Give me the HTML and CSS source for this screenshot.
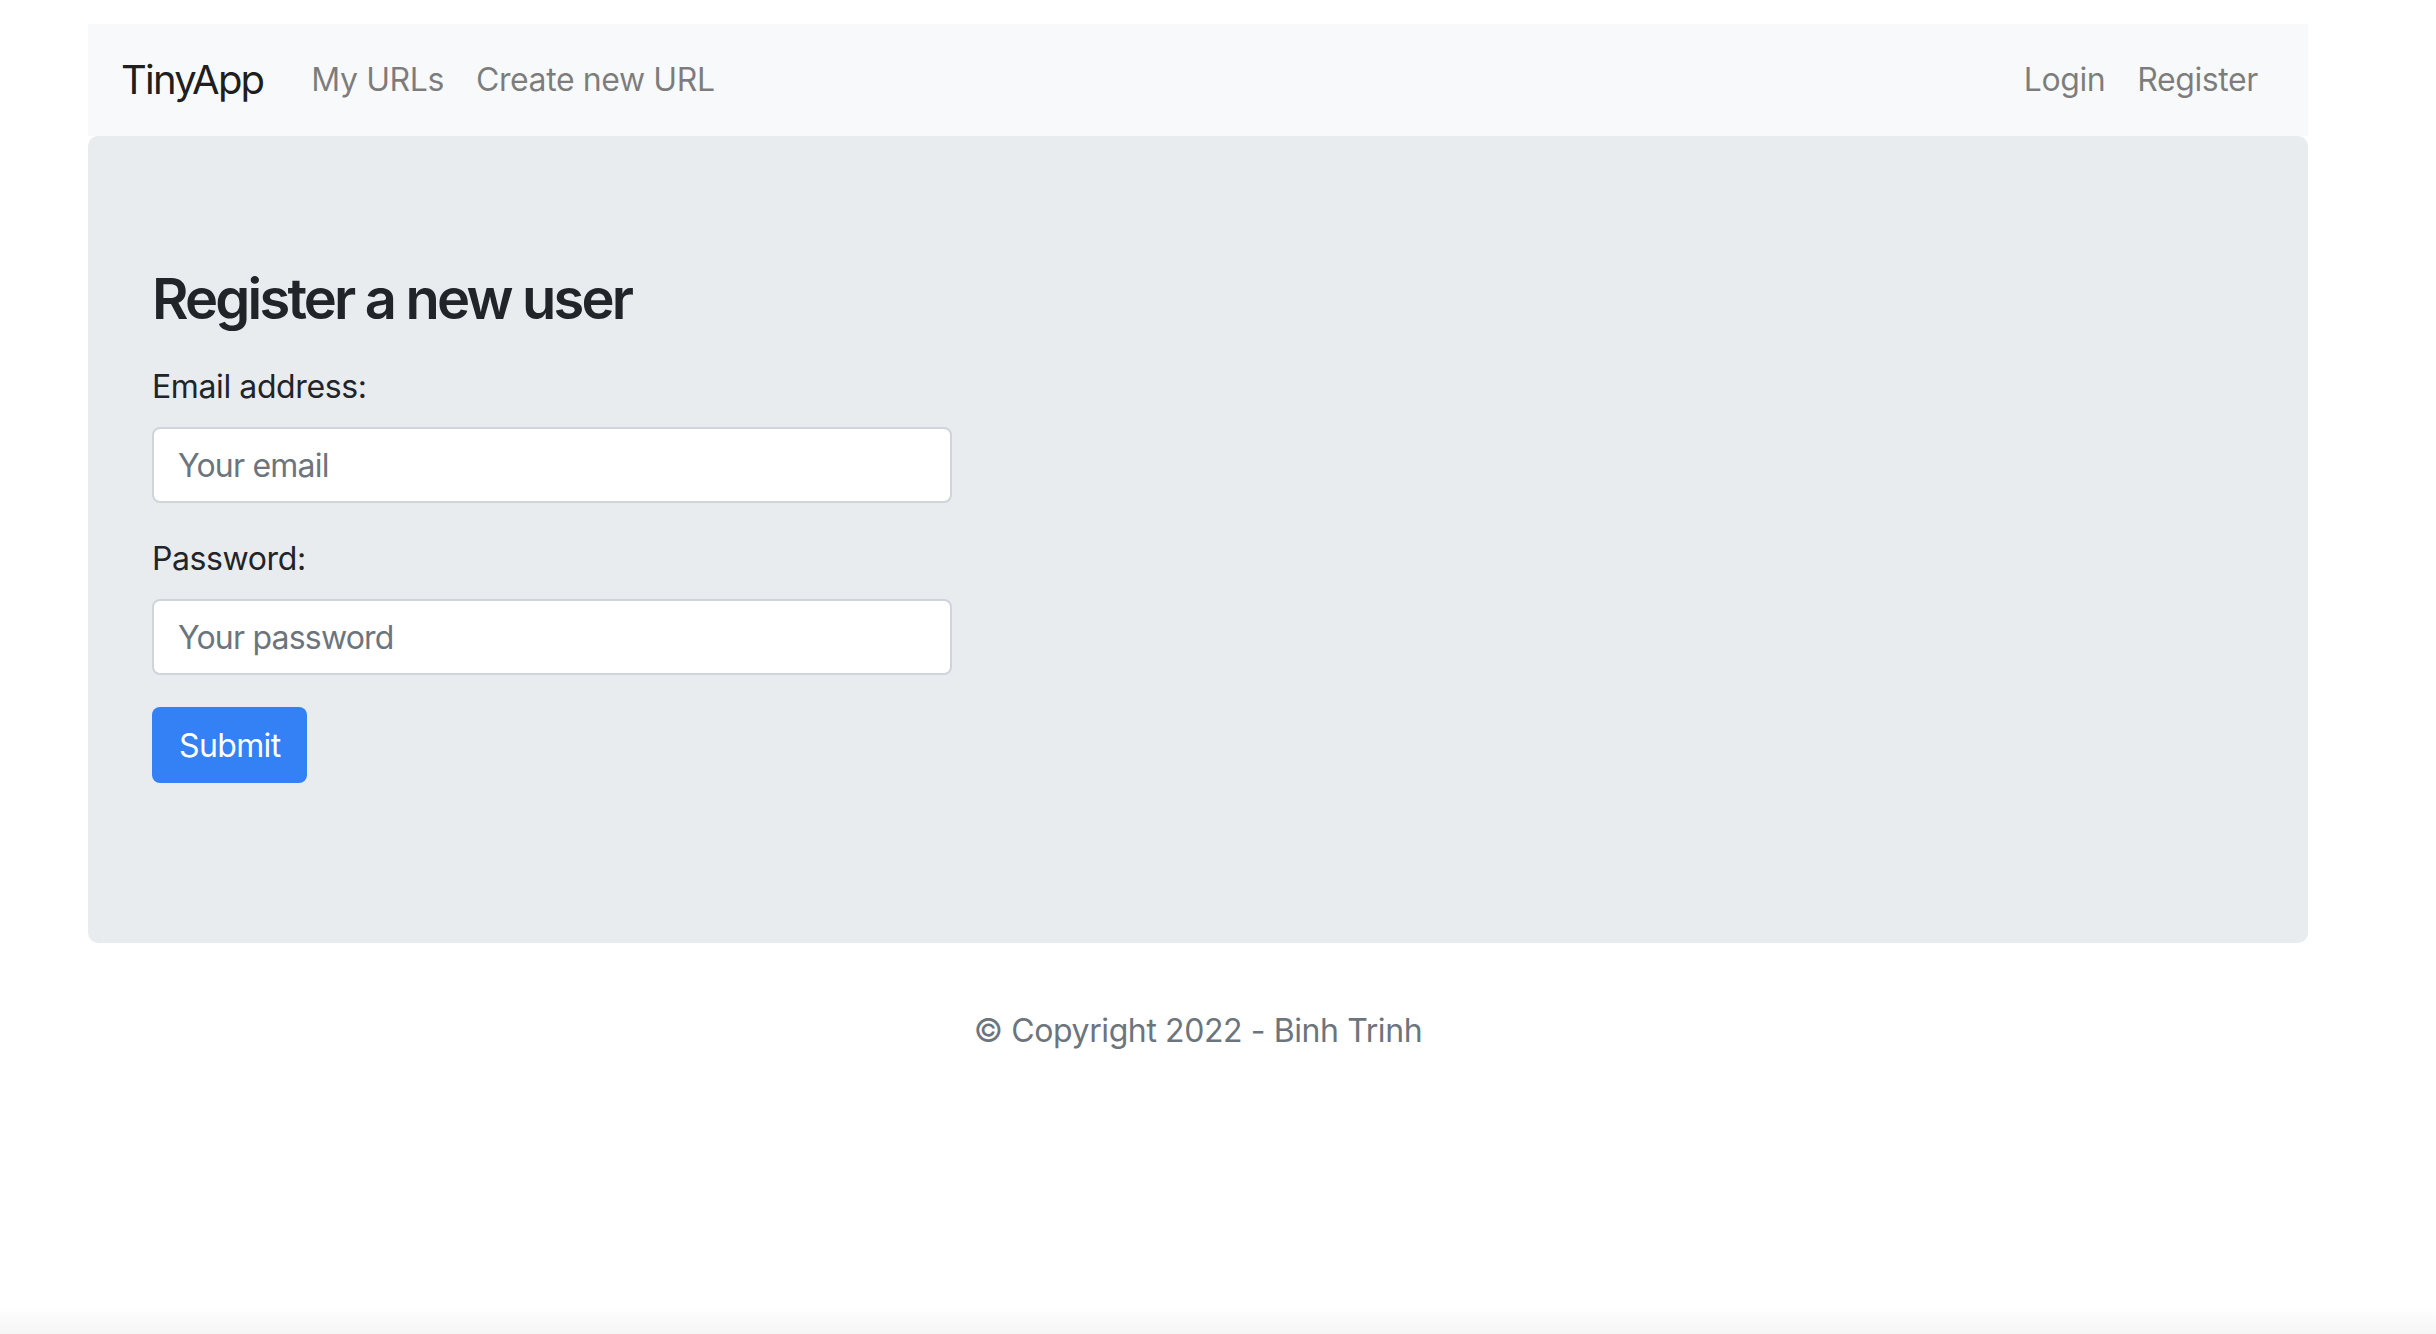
FILE: index.html
```html
<!DOCTYPE html>
<html lang="en">
<head>
<meta charset="utf-8">
<title>TinyApp - Register</title>
<link rel="stylesheet" href="styles.css">
</head>
<body>
<div class="page">
  <nav class="navbar">
    <a class="brand" href="#">TinyApp</a>
    <div class="nav-group">
      <a class="nav-link" href="#">My URLs</a>
      <a class="nav-link" href="#">Create new URL</a>
    </div>
    <div class="nav-group nav-right">
      <a class="nav-link" href="#">Login</a>
      <a class="nav-link" href="#">Register</a>
    </div>
  </nav>
  <main class="jumbotron">
    <h3 class="title">Register a new user</h3>
    <form class="form">
      <div class="form-group">
        <label class="label" for="email">Email address:</label>
        <input class="input" id="email" type="email" placeholder="Your email">
      </div>
      <div class="form-group">
        <label class="label" for="password">Password:</label>
        <input class="input" id="password" type="password" placeholder="Your password">
      </div>
      <div class="form-group">
        <button class="btn" type="button">Submit</button>
      </div>
    </form>
  </main>
  <footer class="footer">© Copyright 2022 - Binh Trinh</footer>
</div>
</body>
</html>
```

FILE: styles.css
```css
html {
  background: linear-gradient(to bottom, #ffffff 1306px, #f5f5f5 1334px);
  min-height: 1334px;
}
body {
  margin: 0;
  font-family: Inter, "Noto Sans", "Liberation Sans", sans-serif;
  letter-spacing: -0.025em;
  color: #212529;
}
.page {
  margin-left: 88px;
  width: 2220px;
  padding-top: 24px;
}
.navbar {
  height: 112px;
  background: #f8f9fa;
  display: flex;
  align-items: center;
  padding: 0 34px 0 33px;
  box-sizing: border-box;
}
.brand {
  font-size: 40px;
  line-height: 60px;
  letter-spacing: -0.045em;
  color: rgba(0, 0, 0, 0.9);
  text-decoration: none;
  margin-right: 32px;
}
.nav-group {
  display: flex;
}
.nav-right {
  margin-left: auto;
}
.nav-link {
  font-size: 32px;
  line-height: 48px;
  padding: 0 16px;
  color: rgba(0, 0, 0, 0.5);
  text-decoration: none;
}
.jumbotron {
  display: block;
  background: #e9ecef;
  border-radius: 10px;
  padding: 128px 64px;
  margin-bottom: 64px;
}
.title {
  margin: 0 0 32px;
  padding-top: 3px;
  height: 64px;
  font-size: 56px;
  line-height: 64px;
  font-weight: 600;
  letter-spacing: -0.05em;
  color: #212529;
}
.form {
  margin: 0;
}
.form-group {
  margin-bottom: 32px;
}
.label {
  display: block;
  font-size: 32px;
  line-height: 48px;
  margin-bottom: 16px;
  color: #212529;
}
.input {
  display: block;
  box-sizing: border-box;
  width: 800px;
  height: 76px;
  padding: 0 24px;
  font-family: inherit;
  font-size: 32px;
  letter-spacing: -0.025em;
  color: #495057;
  background: #ffffff;
  border: 2px solid #ced4da;
  border-radius: 8px;
  outline: none;
}
.input::placeholder {
  color: #6c757d;
  opacity: 1;
}
.btn {
  display: inline-block;
  height: 76px;
  padding: 0 27px;
  font-family: inherit;
  font-size: 32px;
  letter-spacing: -0.02em;
  color: #ffffff;
  background: #3480f5;
  border: none;
  border-radius: 8px;
}
.footer {
  text-align: center;
  font-size: 32px;
  line-height: 48px;
  color: #6c757d;
}
```
